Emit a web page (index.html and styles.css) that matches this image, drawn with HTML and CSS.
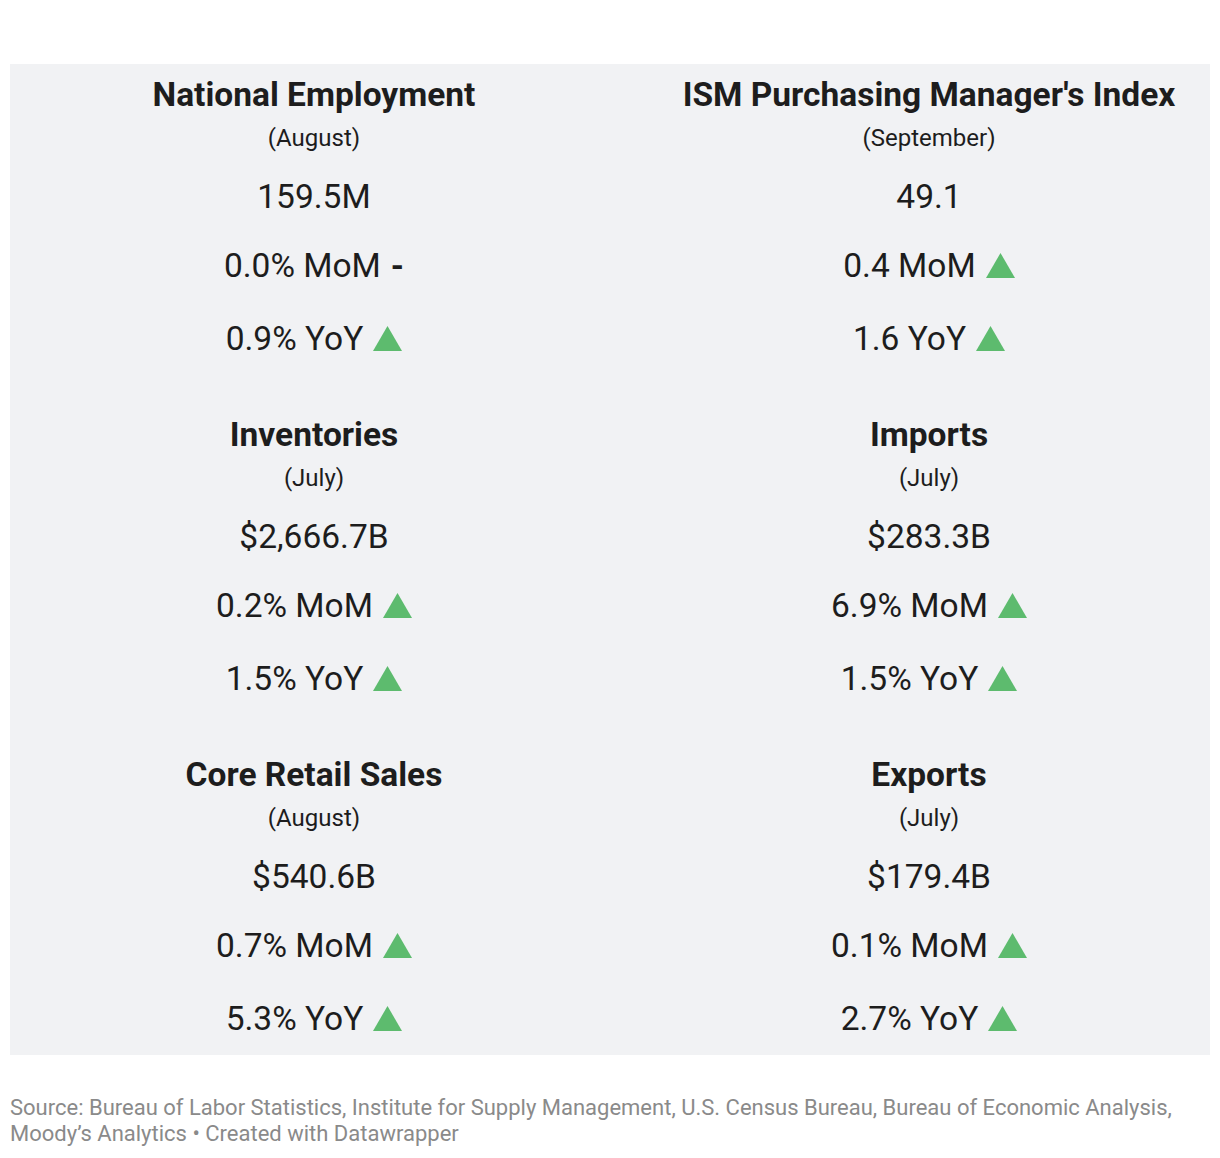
FILE: index.html
```html
<!DOCTYPE html>
<html lang="en">
<head>
<meta charset="utf-8">
<title>Economic indicators</title>
<link rel="stylesheet" href="styles.css">
</head>
<body>
<div class="page">
  <div class="panel">
    <div class="cell">
      <div class="title">National Employment</div>
      <div class="period">(August)</div>
      <div class="value">159.5M</div>
      <div class="change mom">0.0% MoM<span class="flat">-</span></div>
      <div class="change yoy">0.9% YoY<svg class="up" viewBox="0 0 29 25"><polygon points="14.5,0 29,25 0,25"/></svg></div>
    </div>
    <div class="cell">
      <div class="title">ISM Purchasing Manager's Index</div>
      <div class="period">(September)</div>
      <div class="value">49.1</div>
      <div class="change mom">0.4 MoM<svg class="up" viewBox="0 0 29 25"><polygon points="14.5,0 29,25 0,25"/></svg></div>
      <div class="change yoy">1.6 YoY<svg class="up" viewBox="0 0 29 25"><polygon points="14.5,0 29,25 0,25"/></svg></div>
    </div>
    <div class="cell">
      <div class="title">Inventories</div>
      <div class="period">(July)</div>
      <div class="value">$2,666.7B</div>
      <div class="change mom">0.2% MoM<svg class="up" viewBox="0 0 29 25"><polygon points="14.5,0 29,25 0,25"/></svg></div>
      <div class="change yoy">1.5% YoY<svg class="up" viewBox="0 0 29 25"><polygon points="14.5,0 29,25 0,25"/></svg></div>
    </div>
    <div class="cell">
      <div class="title">Imports</div>
      <div class="period">(July)</div>
      <div class="value">$283.3B</div>
      <div class="change mom">6.9% MoM<svg class="up" viewBox="0 0 29 25"><polygon points="14.5,0 29,25 0,25"/></svg></div>
      <div class="change yoy">1.5% YoY<svg class="up" viewBox="0 0 29 25"><polygon points="14.5,0 29,25 0,25"/></svg></div>
    </div>
    <div class="cell">
      <div class="title">Core Retail Sales</div>
      <div class="period">(August)</div>
      <div class="value">$540.6B</div>
      <div class="change mom">0.7% MoM<svg class="up" viewBox="0 0 29 25"><polygon points="14.5,0 29,25 0,25"/></svg></div>
      <div class="change yoy">5.3% YoY<svg class="up" viewBox="0 0 29 25"><polygon points="14.5,0 29,25 0,25"/></svg></div>
    </div>
    <div class="cell">
      <div class="title">Exports</div>
      <div class="period">(July)</div>
      <div class="value">$179.4B</div>
      <div class="change mom">0.1% MoM<svg class="up" viewBox="0 0 29 25"><polygon points="14.5,0 29,25 0,25"/></svg></div>
      <div class="change yoy">2.7% YoY<svg class="up" viewBox="0 0 29 25"><polygon points="14.5,0 29,25 0,25"/></svg></div>
    </div>
  </div>
  <p class="source">Source: Bureau of Labor Statistics, Institute for Supply Management, U.S. Census Bureau, Bureau of Economic Analysis, Moody’s Analytics • Created with Datawrapper</p>
</div>
</body>
</html>
```

FILE: styles.css
```css
html, body {
  margin: 0;
  padding: 0;
  background: #ffffff;
}

body {
  font-family: Roboto, "Liberation Sans", sans-serif;
  color: #1d1d1d;
}

.page {
  padding: 64px 10px 0 10px;
}

.panel {
  background: #f1f2f4;
  display: grid;
  grid-template-columns: 608px 1fr;
  column-gap: 30px;
  row-gap: 51px;
  padding: 11px 0;
}

.cell {
  display: flex;
  flex-direction: column;
  align-items: center;
  text-align: center;
}

.title {
  font-weight: 700;
  font-size: 33.5px;
  line-height: 40px;
  height: 40px;
  white-space: nowrap;
}

.period {
  font-size: 24px;
  line-height: 30px;
  height: 30px;
  margin-top: 8px;
}

.value {
  font-size: 33.5px;
  line-height: 50px;
  height: 50px;
  margin-top: 19px;
}

.change {
  font-size: 33.5px;
  line-height: 50px;
  height: 50px;
  display: flex;
  align-items: center;
  justify-content: center;
  white-space: nowrap;
}

.mom {
  margin-top: 19px;
}

.yoy {
  margin-top: 23px;
}

.up {
  width: 29px;
  height: 25px;
  margin-left: 10px;
  fill: #5dbb6e;
  flex: none;
  position: relative;
  top: -1px;
}

.flat {
  font-weight: 700;
  margin-left: 10px;
}

.source {
  margin: 40px 0 0 0;
  font-size: 22px;
  line-height: 26px;
  color: #8a8a8a;
}
```
